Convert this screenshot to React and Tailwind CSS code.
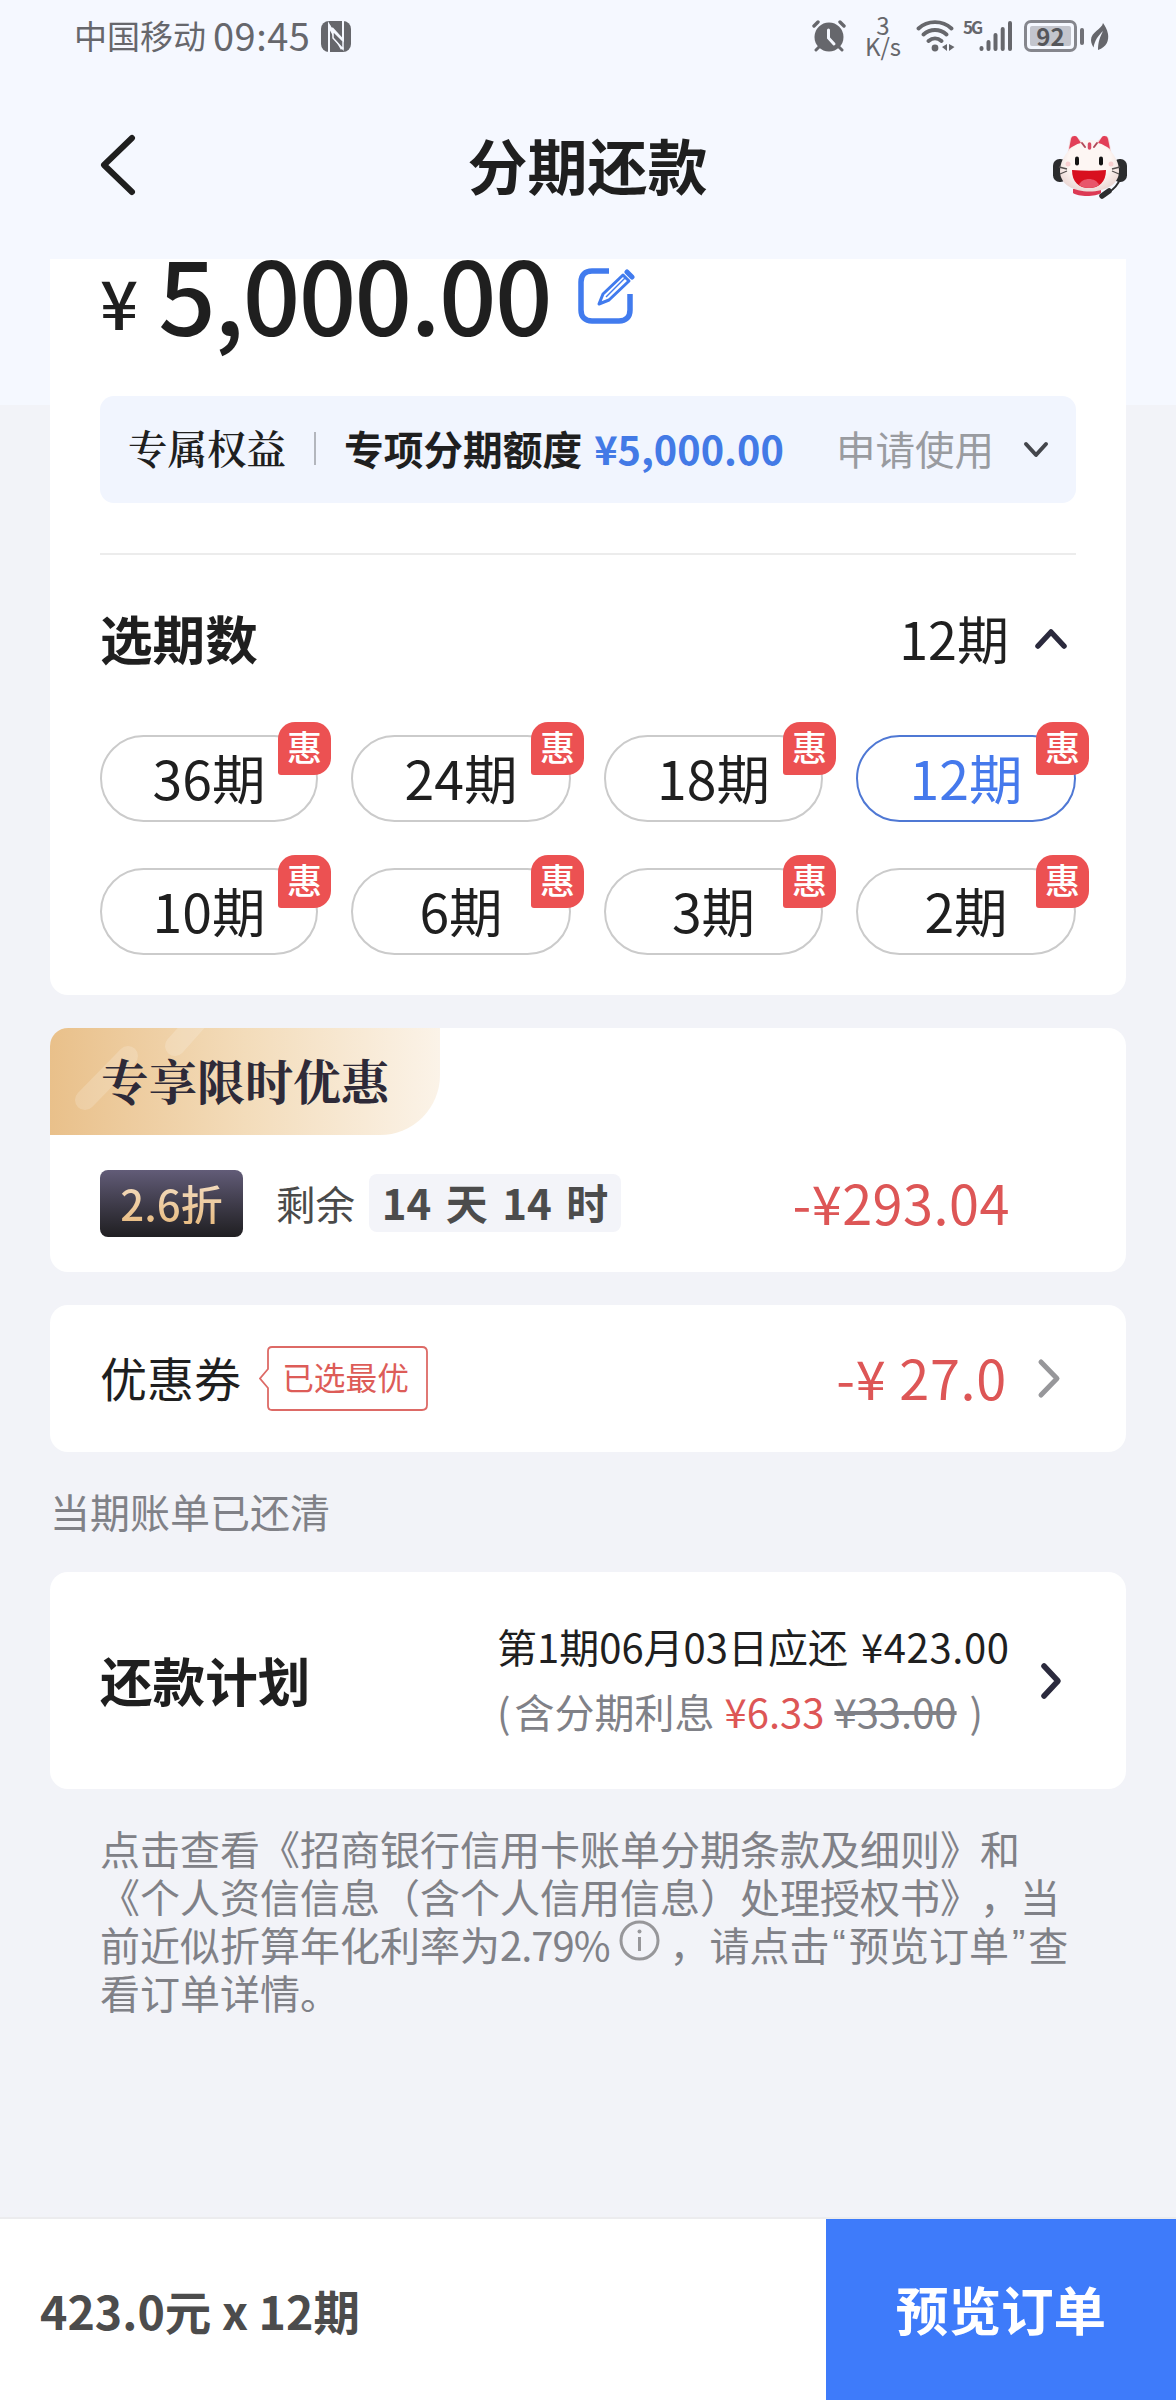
import { useState } from "react";

const TERMS = [36, 24, 18, 12, 10, 6, 3, 2];

const Chevron = ({ d, w, h, className, strokeWidth = 5 }) => (
  <svg width={w} height={h} viewBox={`0 0 ${w} ${h}`} className={className} fill="none" stroke="currentColor"
    strokeWidth={strokeWidth} strokeLinecap="round" strokeLinejoin="round">
    <path d={d} />
  </svg>
);

const StatusBar = () => (
  <div className="h-[72px] pl-[74px] pr-[67px] flex items-center justify-between text-[#66676c]">
    <div className="flex items-center">
      <span className="mb-[2px] text-[33px] leading-none">中国移动</span>
      <span className="ml-[7px] mb-[3px] text-[38px] leading-none tracking-[0.5px]">09:45</span>
      <svg className="ml-[11px]" width="30" height="31" viewBox="0 0 30 31">
        <rect width="30" height="31" rx="8" fill="currentColor" />
        <path d="M8 31V4l14 24M22 0v19L11 7" fill="none" stroke="#f5f8ff" strokeWidth="2" />
        <path d="M8 5l13 23" stroke="#f5f8ff" strokeWidth="2.600" />
        <path d="M12 10v7l10 11v-8z" fill="#66676c" stroke="#f5f8ff" strokeWidth="1.500" />
      </svg>
    </div>

    <div className="flex items-center">
      {/* alarm */}
      <svg width="34" height="32" viewBox="0 0 34 32" fill="none" stroke="currentColor" strokeLinecap="round">
        <circle cx="17" cy="17" r="14.5" fill="currentColor" stroke="none" />
        <path d="M2 6l4-4M32 6l-4-4" strokeWidth="3.4" />
        <path d="M7 27l-3 3M27 27l3 3" strokeWidth="3" />
        <path d="M16.500 10v8l5.500 6" stroke="#f5f8ff" strokeWidth="3" />
      </svg>
      <div className="ml-[19px] mb-[2px] w-[36px] flex flex-col items-center text-[24px] leading-[21px]">
        <span>3</span>
        <span>K/s</span>
      </div>
      {/* wifi */}
      <svg className="ml-[15px]" width="40" height="32" viewBox="0 0 40 32" fill="none" stroke="currentColor" strokeLinecap="round" strokeWidth="3.8">
        <path d="M2.500 8.500c9-8.500 24-8.500 33 0M7.500 14.500c6.500-6 16.500-6 23 0M12.500 21c4-3.500 9-3.500 13 0" />
        <circle cx="19" cy="28" r="3.400" fill="currentColor" stroke="none" />
        <path d="M31 24v7l-5-4zM33 31v-7l5.500 3z" fill="currentColor" stroke="none" />
      </svg>
      {/* mobile signal */}
      <div className="ml-[7px] flex items-start">
        <span className="w-[16px] text-[17px] leading-[16px] font-bold tracking-[-2px] -mt-px">5G</span>
        <svg width="34" height="32" viewBox="0 0 34 32" fill="none" stroke="currentColor" strokeLinecap="round" strokeWidth="4">
          <path d="M2.500 28v1M9.500 22v7M16.500 15v14M23.700 9v20M31 3v26" />
        </svg>
      </div>
      {/* battery */}
      <div className="ml-[11px] flex items-center gap-[3px]">
        <div className="w-[53px] h-[32px] rounded-[7px] border-[3px] border-[#85868d] p-[3px]">
          <div className="h-full rounded-[2px] bg-[#c3c5cd] flex items-center justify-center text-[24px] leading-none font-bold text-[#55565b]">
            92
          </div>
        </div>
        <div className="w-[4px] h-[17px] rounded-full bg-[#707177]" />
      </div>
      <svg className="ml-[7px]" width="18" height="27" viewBox="0 0 18 27">
        <path d="M12 0c-1 6-12 9-12 17 0 3 1.500 6 2.500 7.500C4 17 7 13 12 8 9 14 7 19 7 27c9-3 11-10 10-16-1-5-3-8-5-11z" fill="currentColor" />
      </svg>
    </div>
  </div>
);

const CatAvatar = () => (
  <svg width="74" height="72" viewBox="0 0 74 72">
    <defs>
      <radialGradient id="face" cx="0.5" cy="0.4" r="0.6">
        <stop offset="0.6" stopColor="#fdf6f3" />
        <stop offset="1" stopColor="#ecd9d6" />
      </radialGradient>
    </defs>
    <rect x="0" y="30" width="14" height="23" rx="6.500" fill="#2c2d2f" />
    <rect x="60" y="30" width="14" height="23" rx="6.500" fill="#2c2d2f" />
    <path d="M14 27L17 10c1-4 5-4 7-2l9 8zM59 27L56 10c-1-4-5-4-7-2l-9 8z" fill="#f3dcdc" />
    <path d="M20 60h28v4c-5 4-23 4-28 0z" fill="#dc3a55" />
    <path d="M36.500 11C51 11 66 27 66 42c0 14-14 20.500-29.500 20.500S7 56 7 42c0-15 15-31 29.500-31z" fill="url(#face)" />
    <path d="M16 20l2-10c1-4 5-3 6-2l4 6c-5 1-9 4-12 6zM57 20l-2-10c-1-4-5-3-6-2l-4 6c5 1 9 4 12 6z" fill="#e23f58" />
    <path d="M36.500 15v4" stroke="#d94a62" strokeWidth="3.500" strokeLinecap="round" />
    <path d="M29 14l3 4M44 14l-3 4" stroke="#b24a58" strokeWidth="2" strokeLinecap="round" />
    <rect x="22" y="27.500" width="4" height="9" rx="2" fill="#141414" />
    <rect x="46" y="27.500" width="4" height="9" rx="2" fill="#141414" />
    <path d="M19 41c11 1 23 1 34 0 0 12-7 18-17 18s-17-6-17-18z" fill="#d8101f" />
    <path d="M26 56c3-8 17-8 20 0-5 4-15 4-20 0z" fill="#e8566a" />
    <circle cx="15" cy="35" r="2.500" fill="#f8cfd0" />
    <circle cx="58" cy="35" r="2.500" fill="#f8cfd0" />
    <path d="M6 38l8 2M7 45l7-3M67 38l-8 2M66 45l-7-3" stroke="#55504f" strokeWidth="1.300" />
    <path d="M67 50c-2 6-6 10-12 14" fill="none" stroke="#2c2d2f" strokeWidth="2" />
    <path d="M56 62l-7 5" stroke="#2c2d2f" strokeWidth="5.500" strokeLinecap="round" />
  </svg>
);

const EditIcon = () => (
  <svg className="ml-[27px] mt-[8px]" width="57" height="57" viewBox="0 0 57 57" fill="none" stroke="#417bee">
    <path d="M31 4H14C7 4 3 8 3 15v28c0 7 4 11 11 11h27c7 0 11-4 11-11V27" strokeWidth="5.500" />
    <path d="M21 37l4-10L45 8l6 6L31 33z" strokeWidth="3" strokeLinejoin="round" />
    <path d="M28 30L47 11" strokeWidth="1.500" />
    <path d="M49 5l5 5" strokeWidth="5" strokeLinecap="round" />
  </svg>
);

const TermPill = ({ term, active, onClick }) => (
  <button onClick={onClick}
    className={`relative h-[87px] pb-[3px] rounded-full border-2 flex items-center justify-center text-[53.500px] leading-none ${active ? "border-[#4f78d4] text-[#4579ec]" : "border-[#cbcbcb] text-[#1f1f1f]"}`}>
    {term}期
    <span className="absolute -top-[15px] -right-[15px] w-[53px] h-[53px] rounded-[17px] rounded-bl-[3px] bg-[#ec5152] text-white text-[35px] leading-[47px] font-medium text-center">
      惠
    </span>
  </button>
);

const App = () => {
  const [term, setTerm] = useState(12);

  return (
    <div className="w-[1176px] h-[2400px] flex flex-col overflow-hidden bg-[linear-gradient(#f5f8ff_405px,#f2f3f8_405px)] font-['Noto_Sans_CJK_SC',sans-serif] text-[#1f1f1f] whitespace-nowrap" lang="zh-CN">

      <StatusBar />

      <div className="h-[187px] pt-[22px] pb-[24px] pl-[101px] pr-[49px] flex items-center justify-between">
        <Chevron w={36} h={62} d="M32 4L4 31L32 58" strokeWidth={6} className="w-[74px] -ml-[20px]" />
        <h1 className="mr-[33px] mb-[2px] text-[60px] leading-none font-bold">分期还款</h1>
        <CatAvatar />
      </div>

      <div className="mx-[50px] h-[736px] px-[50px] rounded-b-[18px] bg-white">
        <div className="h-[137px] flex items-start">
          <span className="mt-[5px] text-[67px] leading-[74px] font-medium">¥</span>
          <span className="ml-[20px] -mt-[19px] text-[101px] leading-[104px] tracking-[-1.6px] font-medium">5,000.00</span>
          <EditIcon />
        </div>

        <div className="h-[107px] pb-[3px] pl-[28px] pr-[26px] rounded-[14px] bg-[#f1f5fe] flex items-center">
          <span className="text-[39.500px] leading-none font-['Noto_Serif_CJK_SC','Noto_Sans_CJK_SC',serif] font-semibold">专属权益</span>
          <span className="ml-[28px] mr-[28px] w-[2px] h-[33px] bg-[#b3b6bd]" />
          <span className="text-[39.700px] leading-none font-bold">专项分期额度</span>
          <span className="ml-[12px] text-[39.700px] leading-none font-bold text-[#437ae6]">¥5,000.00</span>
          <span className="ml-auto text-[39.500px] leading-none text-[#999ba0]">申请使用</span>
          <Chevron w={28} h={20} d="M4 4L14 15L24 4" strokeWidth={4} className="ml-[28px] mt-[3px] text-[#44464c]" />
        </div>

        <div className="mt-[50px] h-[2px] bg-[#ececec]" />

        <div className="h-[180px] pb-[15px] flex items-center">
          <h2 className="text-[52.600px] leading-none font-bold">选期数</h2>
          <span className="ml-auto text-[52px] leading-none">{term}期</span>
          <Chevron w={36} h={24} d="M5 19L18 5L31 19" className="ml-[24px] mr-[7px] mt-[2px] text-[#2b2a3d]" strokeWidth={5.5} />
        </div>

        <div className="grid grid-cols-[218px_220px_219px_220px] justify-between gap-y-[46px]">
          {TERMS.map((t) => (
            <TermPill key={t} term={t} active={t === term} onClick={() => setTerm(t)} />
          ))}
        </div>
      </div>

      <div className="mx-[50px] mt-[33px] h-[244px] rounded-[18px] bg-white overflow-hidden">
        <div className="relative w-[390px] h-[107px] rounded-br-[60px] overflow-hidden bg-linear-to-r from-[#e9c08a] via-[#f3dcba] to-[#fbf3e8]">
          <svg className="absolute left-0 top-0" width="200" height="107" stroke="#fff" strokeOpacity="0.18" strokeWidth="20" strokeLinecap="round">
            <path d="M35 72L78 28M125 18L150 -10" />
          </svg>
          <span className="relative block pl-[51px] leading-[103px] text-[48px] font-bold text-[#2e2a38] font-['Noto_Serif_CJK_SC','Noto_Sans_CJK_SC',serif]">
            专享限时优惠
          </span>
        </div>
        <div className="h-[137px] pl-[50px] pr-[116px] flex items-center">
          <div className="w-[143px] h-[67px] pb-[2px] rounded-[8px] bg-linear-to-b from-[#625c78] to-[#201f22] flex items-center justify-center">
            <span className="text-[42px] leading-none font-medium bg-linear-to-b from-[#f3dcc0] to-[#e9bd83] bg-clip-text text-transparent">2.6折</span>
          </div>
          <span className="ml-[33px] mb-[2px] text-[39.500px] leading-none text-[#4a4a4a]">剩余</span>
          <span className="ml-[14px] mb-[2px] w-[252px] h-[58px] rounded-[8px] bg-[#f3f4f9] text-[42px] leading-[56px] [word-spacing:5px] text-center font-bold text-[#4c4c4c]">14 天 14 时</span>
          <span className="ml-auto mb-[3px] text-[54px] leading-none tracking-[0.5px] text-[#dd5656]">-¥293.04</span>
        </div>
      </div>

      <div className="mx-[50px] mt-[33px] h-[147px] pl-[50px] pr-[64px] rounded-[18px] bg-white flex items-center">
        <span className="mb-[4px] text-[47px] leading-none">优惠券</span>
        <div className="relative ml-[18px] w-[169px] h-[65px] pl-[4px] pb-[3px] flex items-center justify-center text-[31.700px] leading-none text-[#dd5c58]">
          <svg className="absolute inset-0" width="169" height="65" fill="none" stroke="#dd6a66" strokeWidth="1.800">
            <path d="M13 1H163Q168 1 168 6V59Q168 64 163 64H13Q9 64 9 60V42L1 32.500L9 23V5Q9 1 13 1Z" />
          </svg>
          已选最优
        </div>
        <span className="ml-auto mb-[3px] text-[54px] leading-none tracking-[0.7px] text-[#dd5656]">-¥ 27.0</span>
        <Chevron w={26} h={42} d="M5 4L21 20.500L5 37" className="ml-[29px] text-[#97979a]" />
      </div>

      <p className="mx-[50px] h-[120px] text-[40px] leading-[118px] text-[#808187]">当期账单已还清</p>

      <div className="mx-[50px] h-[217px] pl-[50px] pr-[61px] rounded-[18px] bg-white flex items-center">
        <h2 className="mb-[3px] text-[52.600px] leading-none font-bold">还款计划</h2>
        <div className="ml-auto mb-[3px] w-[514px] text-[40px] leading-[65px]">
          <p>第1期06月03日应还<span className="ml-[13px] tracking-[0.6px]">¥423.00</span></p>
          <p className="text-[#808187]">
            <span className="mr-[4px]">(</span>含分期利息
            <span className="ml-[10px] mr-[10px] text-[#dd5656]">¥6.33</span>
            <span className="mr-[13px] line-through">¥33.00</span>)
          </p>
        </div>
        <Chevron w={26} h={38} d="M5 4L19 19L5 34" className="ml-[28px] text-[#2b2a3d]" strokeWidth={5.5} />
      </div>

      <div className="ml-[100px] mt-[35px] text-[40px] leading-[48px] text-[#808187] [text-spacing-trim:space-all]">
        <p>点击查看《招商银行信用卡账单分期条款及细则》和</p>
        <p>《个人资信信息（含个人信用信息）处理授权书》，当</p>
        <p className="flex items-center">
          前近似折算年化利率为<span className="tracking-[-1px]">2.79%</span>
          <svg className="ml-[9px] mr-[10px] mb-[7px]" width="41" height="41" viewBox="0 0 41 41" fill="none" stroke="#97979a" strokeWidth="3">
            <circle cx="20.500" cy="20.500" r="18.500" />
            <path d="M20.500 17v14" />
            <circle cx="20.500" cy="11.500" r="2" fill="#97979a" stroke="none" />
          </svg>
          ，请点击<span className="px-[3px] font-['Liberation_Sans']">“</span>预览订单<span className="px-[3px] font-['Liberation_Sans']">”</span>查
        </p>
        <p>看订单详情。</p>
      </div>

      <div className="mt-auto h-[183px] flex border-t-2 border-[#ececee] bg-white">
        <div className="flex-1 pl-[40px] flex items-center text-[46.500px] font-bold text-[#4c4c4c]">
          423.0元 x {term}期
        </div>
        <button className="w-[350px] pb-[2px] bg-[#3e7bfa] text-[52.600px] font-bold text-white">预览订单</button>
      </div>
    </div>
  );
};

export default App;
